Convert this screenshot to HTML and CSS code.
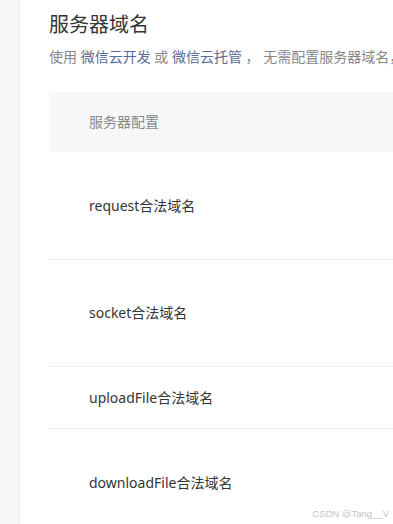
FILE: index.html
```html
<!DOCTYPE html>
<html lang="zh">
<head>
<meta charset="utf-8">
<link rel="stylesheet" href="styles.css">
</head>
<body>
<div class="page">
  <aside class="side"></aside>
  <main class="main">
    <h2 class="title">服务器域名</h2>
    <p class="desc">使用 <a class="link">微信云开发</a> 或 <a class="link">微信云托管</a> ， 无需配置服务器域名，</p>
    <div class="table">
      <div class="head">服务器配置</div>
      <div class="row first">request合法域名</div>
      <div class="row tall">socket合法域名</div>
      <div class="row short">uploadFile合法域名</div>
      <div class="row tall last">downloadFile合法域名</div>
    </div>
  </main>
</div>
<div class="watermark">CSDN @Tang__V</div>
</body>
</html>
```
FILE: styles.css
```css
html, body {
  margin: 0;
  padding: 0;
  background: #fff;
  font-family: "Noto Sans", "Noto Sans CJK SC", sans-serif;
  color: #353535;
  overflow: hidden;
}
.page {
  display: flex;
  height: 524px;
}
.side {
  width: 19px;
  flex: none;
  background: #f6f7f9;
  border-right: 1px solid #eef0f3;
}
.main {
  flex: 1;
  min-width: 0;
  padding-left: 29px;
  overflow: hidden;
}
.title {
  margin: 11px 0 0;
  font-size: 20px;
  line-height: 28px;
  font-weight: 400;
  color: #353535;
  white-space: nowrap;
}
.desc {
  margin: 8px 0 0;
  font-size: 14px;
  line-height: 20px;
  color: #888;
  white-space: nowrap;
}
.link {
  color: #576b95;
}
.table {
  margin-top: 25px;
}
.head {
  height: 60px;
  box-sizing: border-box;
  display: flex;
  align-items: center;
  padding: 0 0 1px 40px;
  background: #f6f7f9;
  font-size: 14px;
  line-height: 20px;
  color: #888;
}
.row {
  display: flex;
  align-items: center;
  box-sizing: border-box;
  padding: 0 0 0 40px;
  font-size: 14px;
  line-height: 20px;
  color: #353535;
  border-bottom: 1px solid #eeeeee;
  white-space: nowrap;
}
.first {
  height: 108px;
}
.tall {
  height: 107px;
}
.short {
  height: 62px;
}
.last {
  height: 108px;
  border-bottom: none;
}
.watermark {
  position: absolute;
  right: 4px;
  bottom: 5px;
  font-family: "Liberation Sans", sans-serif;
  font-size: 9.5px;
  color: #c4c4c4;
}
```
